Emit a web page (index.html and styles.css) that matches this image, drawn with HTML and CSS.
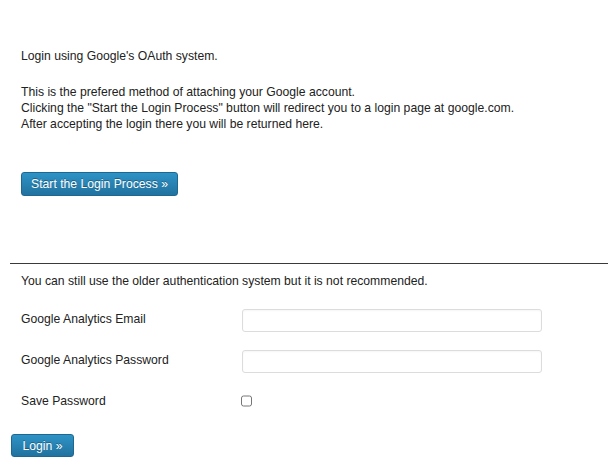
FILE: index.html
```html
<!DOCTYPE html>
<html lang="en">

<head>
    <meta charset="UTF-8">
    <title>Google Analytics Login</title>
    <link rel="stylesheet" href="styles.css">
</head>

<body>
    <div class="oauth">
        <p>Login using Google's OAuth system.</p>
        <p>This is the prefered method of attaching your Google account.<br>
            Clicking the "Start the Login Process" button will redirect you to a login page at google.com.<br>
            After accepting the login there you will be returned here.</p>
        <button class="btn btn-start">Start the Login Process &raquo;</button>
    </div>

    <div class="legacy">
        <p class="note">You can still use the older authentication system but it is not recommended.</p>
        <div class="field">
            <label for="ga-email">Google Analytics Email</label>
            <input type="text" id="ga-email">
        </div>
        <div class="field">
            <label for="ga-pass">Google Analytics Password</label>
            <input type="password" id="ga-pass">
        </div>
        <div class="field field-check">
            <label for="ga-save">Save Password</label>
            <input type="checkbox" id="ga-save">
        </div>
        <button class="btn btn-login">Login &raquo;</button>
    </div>
</body>

</html>
```

FILE: styles.css
```css
*,
*:before,
*:after {
    box-sizing: border-box;
    margin: 0;
    padding: 0;
}

body {
    font-family: "Liberation Sans", Arial, sans-serif;
    font-size: 12.2px;
    line-height: 16px;
    color: #222;
    background: #fff;
}

.oauth {
    padding: 48px 0 0 21px;
}

.oauth p {
    margin-bottom: 20px;
}

.btn {
    display: block;
    height: 24px;
    padding: 0;
    font-family: inherit;
    font-size: 12.2px;
    white-space: nowrap;
    text-align: center;
    color: #fff;
    text-shadow: 0 -1px 0 rgba(0, 0, 0, 0.3);
    background: linear-gradient(to bottom, #2e93c6, #21729f);
    border: 1px solid #1d6791;
    border-radius: 3px;
    cursor: pointer;
}

.btn-start {
    width: 157px;
    margin-top: 40px;
}

.legacy {
    margin: 67px 0 0 10px;
    border-top: 1px solid #3a3a3a;
}

.legacy .note {
    margin: 9px 0 0 11px;
}

.field {
    display: flex;
    align-items: center;
    height: 23px;
    margin-top: 20px;
}

.field + .field {
    margin-top: 18px;
}

.field.field-check {
    margin-top: 16px;
}

.field label {
    width: 232px;
    padding: 0 0 3px 11px;
}

.field.field-check label {
    padding-bottom: 0;
}

.field input[type="text"],
.field input[type="password"] {
    width: 300px;
    height: 23px;
    border: 1px solid #dcdcdc;
    border-radius: 3px;
    background: #fff;
    box-shadow: inset 0 1px 2px rgba(0, 0, 0, 0.04);
}

.field input[type="checkbox"] {
    width: 11px;
    height: 12px;
    margin-left: -1px;
}

.btn-login {
    width: 63px;
    height: 23px;
    margin: 22px 0 0 1px;
}
```
